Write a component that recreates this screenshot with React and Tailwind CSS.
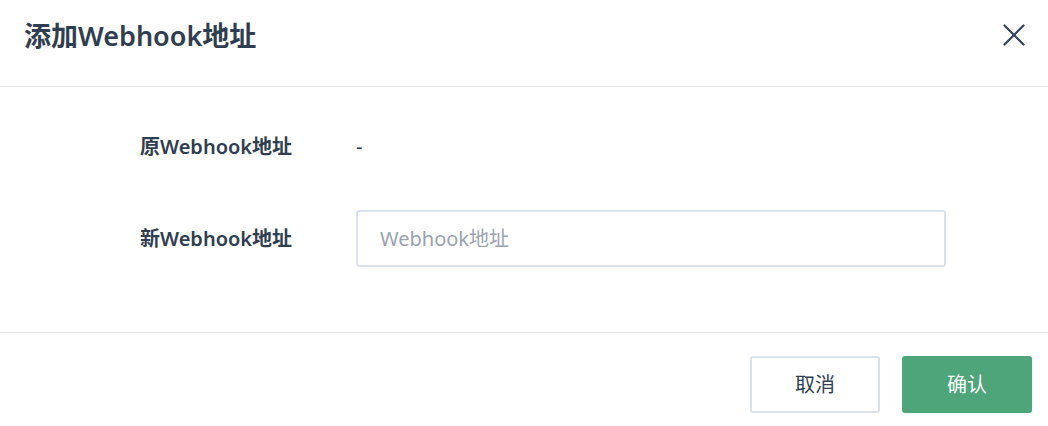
import { X } from "lucide-react"

function Row({ label, children }) {
    return (
        <div className="flex items-center h-[57px]">
            <div className="w-[216px] pl-[140px] box-content shrink-0 text-[20px] font-semibold text-[#303e51] whitespace-nowrap">{label}</div>
            {children}
        </div>
    )
}

export default function App() {
    return (
        <div className="w-[1048px] h-[426px] bg-white overflow-hidden [font-family:'Noto_Sans','Noto_Sans_CJK_SC',sans-serif]">
            <header className="h-[87px] flex items-center justify-between pl-6 pr-[15px] border-b border-[#e3e7ec]">
                <h1 className="text-[27px] font-semibold text-[#303e51] -mt-[14px]">添加Webhook地址</h1>
                <button className="text-[#34435a] -mt-[16px]">
                    <X size={38} strokeWidth={1.4} />
                </button>
            </header>

            <section className="flex flex-col gap-[35px] pt-[31px] pb-[65px] border-b border-[#e3e7ec]">
                <Row label="原Webhook地址">
                    <span className="text-[20px] text-[#303e51]">-</span>
                </Row>
                <Row label="新Webhook地址">
                    <input
                        type="text"
                        placeholder="Webhook地址"
                        className="w-[590px] h-[57px] border-2 border-[#dce2ea] rounded-[3px] px-[22px] text-[20px] text-[#303e51] placeholder:text-[#9aa3b0] outline-none"
                    />
                </Row>
            </section>

            <footer className="flex justify-end gap-[22px] pt-[23px] pr-4">
                <button className="w-[130px] h-[57px] border-2 border-[#dce2ea] rounded-[3px] bg-white text-[20px] text-[#303e51]">取消</button>
                <button className="w-[130px] h-[57px] rounded-[3px] bg-[#4ea57a] text-[20px] text-white">确认</button>
            </footer>
        </div>
    )
}
